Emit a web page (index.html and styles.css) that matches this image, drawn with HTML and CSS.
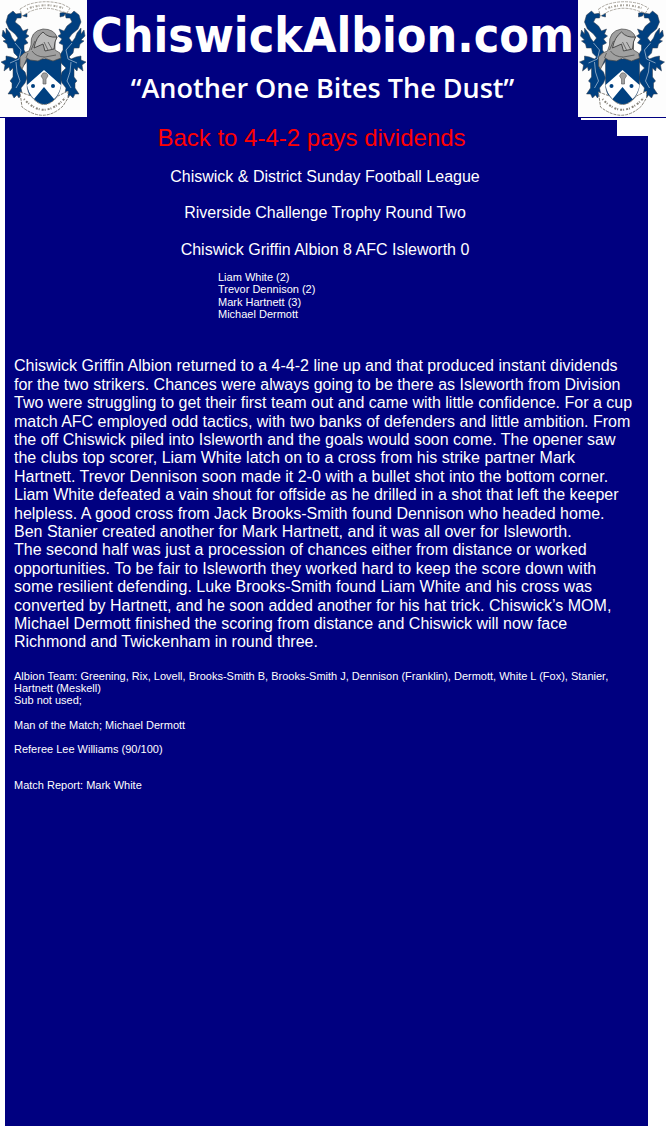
FILE: index.html
```html
<!DOCTYPE html>
<html lang="en"><head><meta charset="utf-8"><title>ChiswickAlbion.com</title><link rel="stylesheet" href="styles.css"></head>
<body>
<svg class="defs" width="0" height="0" aria-hidden="true">
<symbol id="crest" viewBox="0 0 87 117">
<g id="wing" fill="#004080" stroke="#333c4c" stroke-width=".5">
<path d="M13 11L16 14L22 13L21 18L17 18L15 22L20 26L23 31L28 29L26 34L29 36L25 39L28 43L24 45L24 50L27 55L28 60L25 64L21 68L25 72L27 78L25 83L21 88L22 93L19 98L17 95L14 98L12 94L8 94L12 88L12 83L10 81L13 77L13 68L10 71L9 67L4 71L5 65L1 62L6 60L6 56L11 57L16 59L18 57L14 53L13 48L8 48L7 44L3 41L6 40L2 36L3 30L6 34L6 28L10 33L12 38L15 42L18 38L15 34L9 29L6 22L8 15Z"/>
<path d="M21 12L27 13L27 17L23 16Z"/>
<path fill="none" stroke="#fdfdfd" d="M15 43L21 50L19 59L10 63M16 62L17 72L20 81L16 88"/>
</g>
<use href="#wing" transform="translate(87 0) scale(-1 1)"/>
<path fill="#fff" stroke="#99948b" stroke-dasharray="3 1" stroke-width=".8" d="M20 9L27 5Q44 -1 62 4L70 8L67 13L60 11Q44 5 29 12L22 16Z"/>
<path fill="none" stroke="#aaa69e" stroke-width="2" stroke-dasharray="1 2 2 1" d="M27 9Q44 2 63 8"/>
<path fill="#004080" stroke="#333c4c" stroke-width=".5" d="M27 59H61V84C60 95 54 103 44 107C34 103 27 95 27 84Z"/>
<path fill="#fff" d="M27 85L44 70L61 85C60 91 57 97 54 99L44 87L34 99C30 95 28 90 27 85Z"/>
<circle cx="33" cy="86" r="2" fill="#004080"/><circle cx="53" cy="86" r="2" fill="#004080"/>
<path fill="#a0a0a0" stroke="#555" stroke-width=".6" d="M43 73Q47 72 48 76L46 79L46 84H43V79L41 76Z"/>
<path fill="#a0a0a0" stroke="#4b4b4b" stroke-width=".7" d="M31 45Q30 31 43 29Q54 29 57 37L55 41L55 50L60 53L61 58L53 61L44 58L38 61L30 60L27 58L24 65L22 69L20 66L20 57L24 53L29 51Z"/>
<path fill="#bbb" stroke="#333" stroke-width=".8" d="M43 32Q48 38 57 37L55 42L54 49L45 51L43 44L34 48Q36 37 43 32Z"/>
<path fill="none" stroke="#444" stroke-width=".7" d="M32 51Q36 57 45 57L56 55M26 58L28 53M44 42L48 50M48 42L52 49M35 41L31 50"/>
<path fill="#fff" stroke="#88847c" stroke-dasharray="3 1" d="M20 92L31 96Q44 113 58 96L68 91L68 98L63 106Q44 124 22 107Z"/>
<path fill="none" stroke="#88847c" stroke-width="2" stroke-dasharray="1 2 2 1" d="M24 99Q44 121 65 98"/>
</symbol>
</svg>
<header class="masthead">
<svg class="crest" role="img" aria-label="Club crest"><use href="#crest"/></svg>
<div class="brand"><h1 class="title">ChiswickAlbion.com</h1><p class="slogan">“Another One Bites The Dust”</p></div>
<svg class="crest" role="img" aria-label="Club crest"><use href="#crest"/></svg>
</header>
<main class="page">
<div class="notch" aria-hidden="true"></div><div class="step" aria-hidden="true"></div>
<article class="report">
<h2 class="headline">Back to 4-4-2 pays dividends</h2>
<div class="match"><p>Chiswick &amp; District Sunday Football League</p><p>Riverside Challenge Trophy Round Two</p><p>Chiswick Griffin Albion 8 AFC Isleworth 0</p></div>
<ul class="scorers small"><li>Liam White (2)</li><li>Trevor Dennison (2)</li><li>Mark Hartnett (3)</li><li>Michael Dermott</li></ul>
<p class="story">Chiswick Griffin Albion returned to a 4-4-2 line up and that produced instant dividends for the two strikers. Chances were always going to be there as Isleworth from Division Two were struggling to get their first team out and came with little confidence. For a cup match AFC employed odd tactics, with two banks of defenders and little ambition. From the off Chiswick piled into Isleworth and the goals would soon come. The opener saw the clubs top scorer, Liam White latch on to a cross from his strike partner Mark Hartnett. Trevor Dennison soon made it 2-0 with a bullet shot into the bottom corner. Liam White defeated a vain shout for offside as he drilled in a shot that left the keeper helpless. A good cross from Jack Brooks-Smith found Dennison who headed home. Ben Stanier created another for Mark Hartnett, and it was all over for Isleworth.<br>The second half was just a procession of chances either from distance or worked opportunities. To be fair to Isleworth they worked hard to keep the score down with some resilient defending. Luke Brooks-Smith found Liam White and his cross was converted by Hartnett, and he soon added another for his hat trick. Chiswick’s MOM, Michael Dermott finished the scoring from distance and Chiswick will now face Richmond and Twickenham in round three.</p>
<div class="notes small"><p>Albion Team: Greening, Rix, Lovell, Brooks-Smith B, Brooks-Smith J, Dennison (Franklin), Dermott, White L (Fox), Stanier, Hartnett (Meskell)<br>Sub not used;</p><p>Man of the Match; Michael Dermott</p><p>Referee Lee Williams (90/100)</p><p class="credit">Match Report: Mark White</p></div>
</article>
</main>
</body></html>
```
FILE: styles.css
```css
* { box-sizing: border-box; margin: 0; padding: 0; }
body { min-height: 100vh; display: flex; flex-direction: column; background: #fff; color: #fff; font: 16px/1.15 "Liberation Sans", Arial, sans-serif; }
.defs { position: absolute; }
.masthead { display: flex; background: #000080; border-bottom: 1px solid #000080; }
.crest { flex: none; width: 87px; height: 117px; background: #fdfdfd; }
.crest:last-child { width: 88px; }
.brand { flex: 1; min-width: 0; text-align: center; white-space: nowrap; }
.title { padding-top: 7px; font: bold 48px/56px "DejaVu Sans Condensed", Verdana, sans-serif; }
.slogan { padding: 5px 20px 0 0; font: 600 27px/40px "Open Sans", sans-serif; }
.page { position: relative; flex: 1; margin: 0 18px 0 5px; background: #000080; }
.notch { position: absolute; top: 0; right: 0; width: 31px; height: 18px; background: #fff; }
.step { position: absolute; top: 0; right: 31px; width: 36px; height: 2px; background: #fff; }
.report { padding: 6px 11px 24px 9px; }
.headline { margin-right: 28px; font-size: 24px; font-weight: normal; line-height: 28px; text-align: center; color: #f00; }
.match { display: grid; gap: 18px; padding: 16px 0 12px; margin-right: 1px; text-align: center; }
.small { font-size: 11px; line-height: 1.12; }
.scorers { list-style: none; margin-left: 204px; }
.story { margin-top: 37px; }
.notes { display: grid; gap: 12px; margin-top: 18px; }
.credit { margin-top: 12px; }
```
